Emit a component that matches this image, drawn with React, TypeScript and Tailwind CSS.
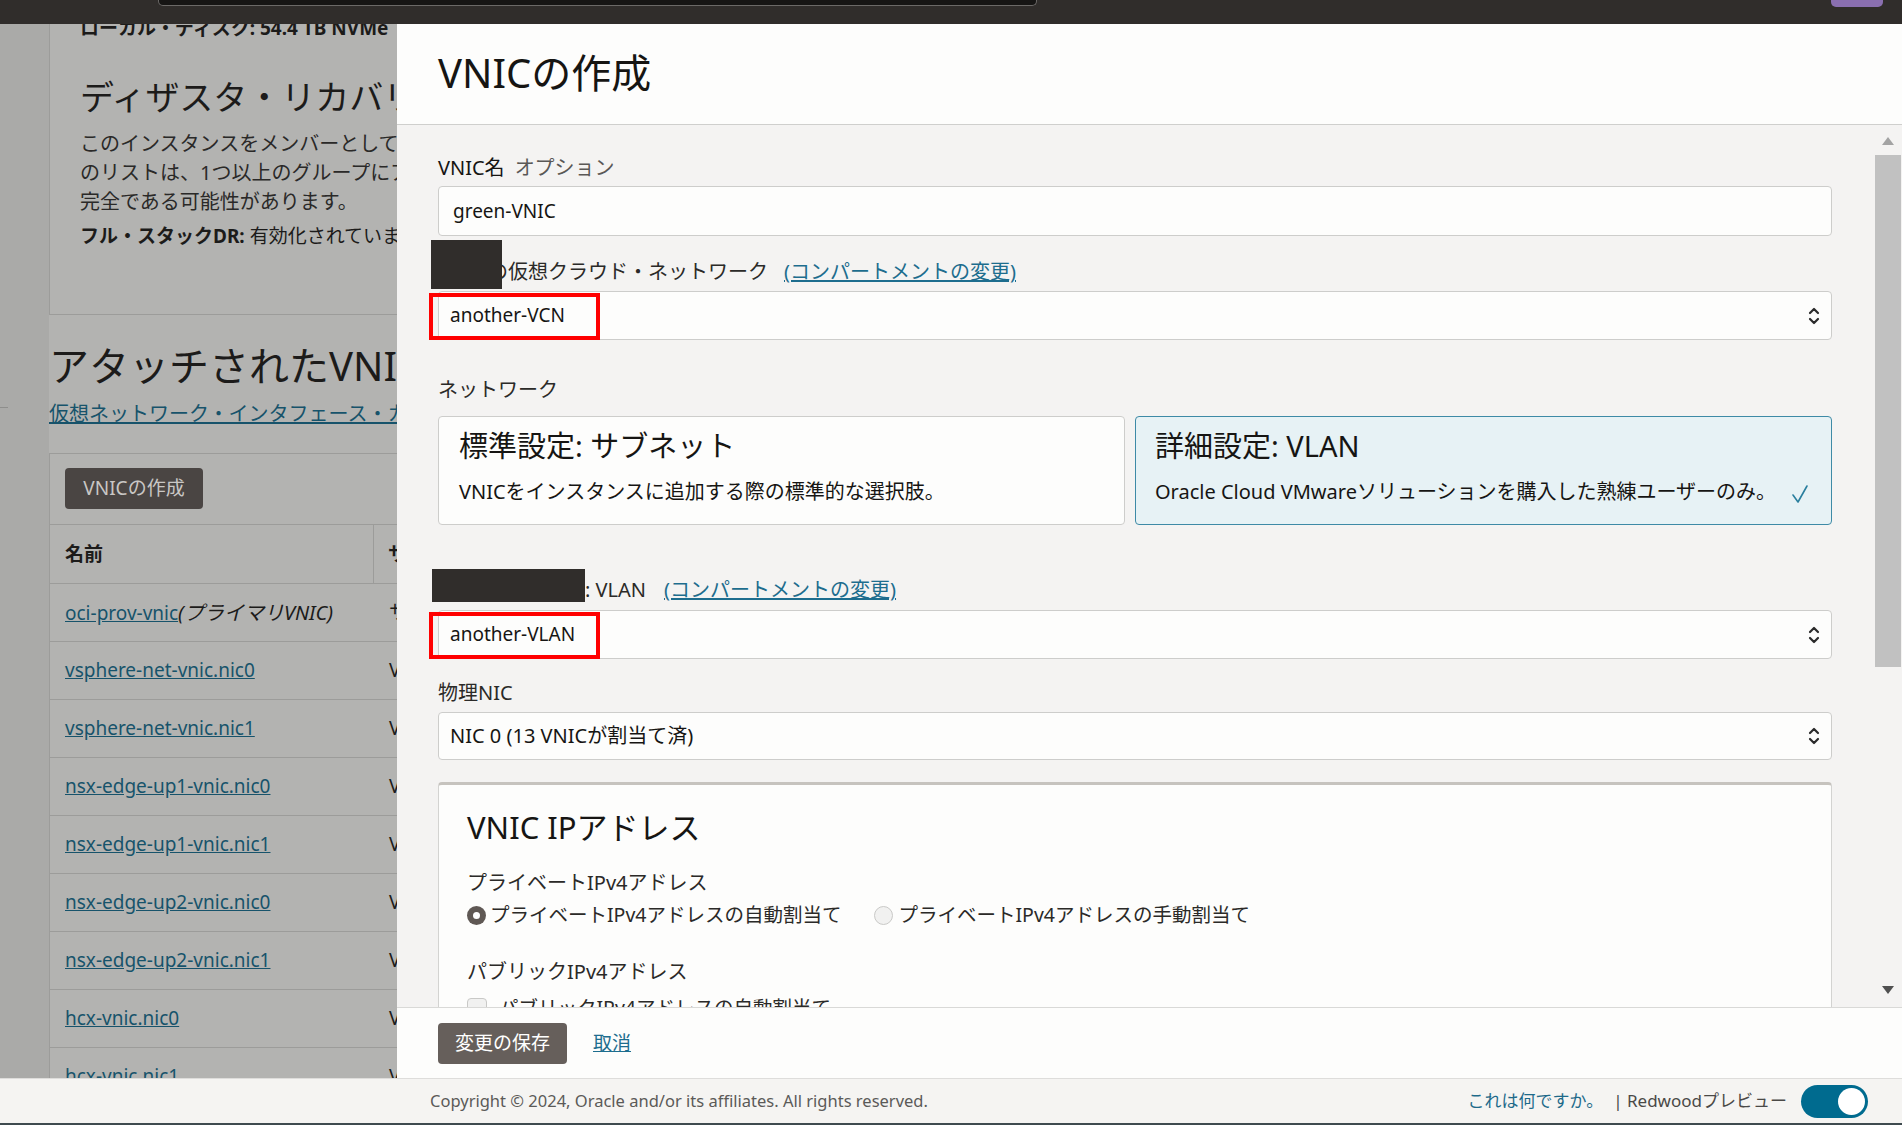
import React from 'react';

const font = "font-['Noto_Sans','Noto_Sans_CJK_JP',sans-serif]";

const rows = [
  'vsphere-net-vnic.nic0',
  'vsphere-net-vnic.nic1',
  'nsx-edge-up1-vnic.nic0',
  'nsx-edge-up1-vnic.nic1',
  'nsx-edge-up2-vnic.nic0',
  'nsx-edge-up2-vnic.nic1',
  'hcx-vnic.nic0',
  'hcx-vnic.nic1',
];

const Chevrons: React.FC = () => (
  <svg width="14" height="22" viewBox="0 0 14 22" fill="none" stroke="#2a2a2a" strokeWidth="2.2" strokeLinecap="round" strokeLinejoin="round">
    <path d="M3 8 L7 4 L11 8" />
    <path d="M3 14 L7 18 L11 14" />
  </svg>
);

const SelectBox: React.FC<{ value: string; marked?: boolean; h: string; size?: string }> = ({ value, marked, h, size = 'text-[19px]' }) => (
  <div className={`relative flex items-center justify-between ${h} bg-[#fdfdfc] border border-[#cdcdcb] rounded-[4px] pl-[11px] pr-[10px]`}>
    <span className={`${size} text-[#161513]`}>{value}</span>
    <Chevrons />
    {marked && (
      <div className="absolute -left-[10px] top-[1px] w-[171px] h-[47px] border-[4px] border-[#ff0000]" />
    )}
  </div>
);

const LeftPage: React.FC = () => (
  <div className="flex w-[397px] shrink-0 overflow-hidden bg-[#b3b3b1]">
    <div className="w-[49px] shrink-0 bg-[#aaaaa8] flex flex-col">
      <div className="h-[383px]" />
      <div className="w-[8px] h-px bg-[#8e8e8c]" />
    </div>
    <div className="w-[700px] shrink-0 text-[#1c1b1a]">
      <div className="border-l border-b border-[#9c9c9a] pl-[30px] h-[291px] overflow-hidden">
        <div className="-mt-[8px] text-[19px] leading-[24px] font-bold whitespace-nowrap">ローカル・ディスク: 54.4 TB NVMe</div>
        <div className="mt-[37px] text-[34px] leading-[40px] whitespace-nowrap">ディザスタ・リカバリ</div>
        <div className="mt-[12px] text-[20px] leading-[29px] text-[#2a2928] whitespace-nowrap">
          <div>このインスタンスをメンバーとして含むディザスタ・リカバリ保護グループ</div>
          <div>のリストは、1つ以上のグループにアクセスする権限がないため、不</div>
          <div>完全である可能性があります。</div>
        </div>
        <div className="mt-[8px] text-[19px] leading-[24px] whitespace-nowrap">
          <span className="font-bold">フル・スタックDR:</span> 有効化されていません
        </div>
      </div>
      <div className="mt-[28px] text-[40px] leading-[46px] whitespace-nowrap">アタッチされたVNIC</div>
      <div className="mt-[12px] text-[20px] leading-[26px] text-[#17536b] underline whitespace-nowrap">仮想ネットワーク・インタフェース・カード(VNIC)</div>
      <div className="mt-[26px] border border-[#9c9c9a]">
        <div className="pt-[14px] pl-[15px] pb-[15px]">
          <div className="w-[138px] h-[41px] rounded-[4px] bg-[#4a4543] text-[#c9c7c5] text-[19px] flex items-center justify-center">VNICの作成</div>
        </div>
        <div className="flex h-[60px] border-t border-b border-[#9c9c9a] text-[19px] font-bold">
          <div className="w-[324px] border-r border-[#9c9c9a] pl-[15px] flex items-center">名前</div>
          <div className="pl-[14px] flex items-center">サブネットまたはVLAN</div>
        </div>
        <div className="flex h-[58px] border-b border-[#9c9c9a] text-[19px] items-center">
          <div className="w-[324px] pl-[15px] whitespace-nowrap">
            <span className="text-[#17536b] underline">oci-prov-vnic</span>
            <span className="italic text-[20px]">(プライマリVNIC)</span>
          </div>
          <div className="pl-[15px]">サブネット</div>
        </div>
        {rows.map((r) => (
          <div key={r} className="flex h-[58px] border-b border-[#9c9c9a] text-[19px] items-center">
            <div className="w-[324px] pl-[15px] text-[#17536b] underline whitespace-nowrap">{r}</div>
            <div className="pl-[15px]">VLAN</div>
          </div>
        ))}
      </div>
    </div>
  </div>
);

const Radio: React.FC<{ on?: boolean }> = ({ on }) =>
  on ? (
    <div className="w-[19px] h-[19px] rounded-full bg-[#5f5854] flex items-center justify-center shrink-0">
      <div className="w-[7px] h-[7px] rounded-full bg-white" />
    </div>
  ) : (
    <div className="w-[19px] h-[19px] rounded-full bg-[#f1f1f0] border border-[#c9c9c7] shrink-0" />
  );

const Drawer: React.FC = () => (
  <div className="flex-1 flex flex-col min-w-0 text-[#161513]">
    <div className="h-[101px] shrink-0 bg-[#fdfdfc] border-b border-[#cfcfcd] pl-[41px] flex items-center">
      <h1 className="text-[40px] leading-[46px] -mt-[2px]">VNICの作成</h1>
    </div>
    <div className="flex-1 flex min-h-0 bg-[#f4f3f2]">
      <div className="flex-1 min-w-0 overflow-hidden pl-[41px] pr-[42px]">
        <div className="pt-[31px] text-[20px] leading-[24px]">
          VNIC名<span className="ml-[10px] text-[#5a5856]">オプション</span>
        </div>
        <div className="mt-[6px] h-[50px] bg-[#fdfdfc] border border-[#cdcdcb] rounded-[4px] pl-[14px] flex items-center text-[19px]">green-VNIC</div>

        <div className="flex items-end h-[49px] mt-[4px] text-[20px] leading-[24px]">
          <div className="relative z-10 -ml-[7px] w-[71px] h-[49px] bg-[#302d2b] shrink-0" />
          <span className="-ml-[14px] mb-[5px] text-[#2b2a28]">の仮想クラウド・ネットワーク</span>
          <span className="ml-[16px] mb-[5px] text-[#1d6d8e] underline">(コンパートメントの変更)</span>
        </div>
        <div className="mt-[2px]">
          <SelectBox value="another-VCN" marked h="h-[49px]" />
        </div>

        <div className="mt-[38px] text-[20px] leading-[24px] text-[#2b2a28]">ネットワーク</div>
        <div className="mt-[14px] flex gap-[10px] h-[109px]">
          <div className="w-[687px] shrink-0 bg-[#fdfdfc] border border-[#cdcdcb] rounded-[4px] pl-[20px] pt-[12px]">
            <div className="text-[29px] leading-[34px]">標準設定: サブネット</div>
            <div className="mt-[16px] text-[20px] leading-[26px]">VNICをインスタンスに追加する際の標準的な選択肢。</div>
          </div>
          <div className="flex-1 bg-[#e7f2f5] border border-[#3e8aa6] rounded-[4px] pl-[19px] pt-[12px] pr-[22px]">
            <div className="text-[29px] leading-[34px]">詳細設定: VLAN</div>
            <div className="mt-[16px] flex items-center justify-between text-[20px] leading-[26px]">
              <span>Oracle Cloud VMwareソリューションを購入した熟練ユーザーのみ。</span>
              <svg width="18" height="20" viewBox="0 0 18 20" fill="none" stroke="#2a7f9e" strokeWidth="1.6" strokeLinecap="round" strokeLinejoin="round" className="mt-[4px]">
                <path d="M2 11 L7 18 L16 2" />
              </svg>
            </div>
          </div>
        </div>

        <div className="flex items-end h-[33px] mt-[44px] text-[20px] leading-[24px]">
          <div className="-ml-[6px] w-[153px] h-[33px] bg-[#302d2b] shrink-0" />
          <span className="text-[#2b2a28]">: VLAN</span>
          <span className="ml-[18px] text-[#1d6d8e] underline">(コンパートメントの変更)</span>
        </div>
        <div className="mt-[8px]">
          <SelectBox value="another-VLAN" marked h="h-[49px]" />
        </div>

        <div className="mt-[22px] text-[20px] leading-[24px] text-[#2b2a28]">物理NIC</div>
        <div className="mt-[7px]">
          <SelectBox value="NIC 0 (13 VNICが割当て済)" h="h-[48px]" size="text-[20px]" />
        </div>

        <div className="mt-[22px] h-[400px] bg-[#fdfdfc] border-t-[3px] border-t-[#c6c3be] border-x border-x-[#d3d3d1] rounded-t-[4px] pl-[28px]">
          <div className="pt-[24px] text-[31px] leading-[36px]">VNIC IPアドレス</div>
          <div className="mt-[26px] text-[20px] leading-[24px] text-[#2b2a28]">プライベートIPv4アドレス</div>
          <div className="mt-[8px] flex items-center text-[19.5px] leading-[24px] text-[#2b2a28]">
            <Radio on />
            <span className="ml-[4px]">プライベートIPv4アドレスの自動割当て</span>
            <div className="ml-[33px]"><Radio /></div>
            <span className="ml-[5px]">プライベートIPv4アドレスの手動割当て</span>
          </div>
          <div className="mt-[33px] text-[20px] leading-[24px] text-[#2b2a28]">パブリックIPv4アドレス</div>
          <div className="mt-[12px] flex items-center text-[19.5px] leading-[24px] text-[#2b2a28]">
            <div className="w-[20px] h-[20px] rounded-[4px] border border-[#c9c9c7] bg-[#f1f1f0]" />
            <span className="ml-[12px]">パブリックIPv4アドレスの自動割当て</span>
          </div>
        </div>
      </div>
      <div className="w-[28px] shrink-0 flex flex-col items-center">
        <svg width="12" height="8" viewBox="0 0 12 8" className="mt-[12px]">
          <path d="M0 8 L6 0 L12 8 Z" fill="#a3a3a3" />
        </svg>
        <div className="mt-[10px] w-[26px] h-[512px] bg-[#c1c1c1]" />
        <div className="flex-1" />
        <svg width="12" height="8" viewBox="0 0 12 8" className="mb-[13px]">
          <path d="M0 0 L12 0 L6 8 Z" fill="#505050" />
        </svg>
      </div>
    </div>
    <div className="h-[71px] shrink-0 bg-[#fdfdfc] border-t border-[#d9d9d7] pl-[41px] flex items-center">
      <div className="w-[129px] h-[41px] rounded-[4px] bg-[#665f5b] text-white text-[19px] flex items-center justify-center">変更の保存</div>
      <span className="ml-[26px] text-[19px] text-[#1d6d8e] underline">取消</span>
    </div>
  </div>
);

const App: React.FC = () => (
  <div className={`w-[1902px] h-[1125px] flex flex-col overflow-hidden ${font}`}>
    <div className="h-[24px] shrink-0 bg-[#302d2b] flex items-start">
      <div className="ml-[158px] w-[879px] h-[6px] bg-[#161514] border-x border-b border-[#6b6967] rounded-b-[5px]" />
      <div className="flex-1" />
      <div className="mr-[19px] w-[52px] h-[7px] bg-[#8a6fb0] rounded-b-[5px]" />
    </div>
    <div className="flex-1 flex min-h-0">
      <LeftPage />
      <Drawer />
    </div>
    <div className="h-[47px] shrink-0 bg-[#f5f4f2] border-t border-[#dedddb] border-b-2 border-b-[#3f4b4f] flex items-center pl-[430px] pr-[34px]">
      <span className="text-[16.5px] text-[#5b5a58]">Copyright © 2024, Oracle and/or its affiliates. All rights reserved.</span>
      <div className="flex-1" />
      <span className="text-[17px] text-[#1e6a8a]">これは何ですか。</span>
      <span className="ml-[10px] text-[17px] text-[#4a4947]">| Redwoodプレビュー</span>
      <div className="ml-[14px] w-[67px] h-[33px] rounded-full bg-[#006b8f] flex items-center justify-end pr-[3px]">
        <div className="w-[27px] h-[27px] rounded-full bg-white" />
      </div>
    </div>
  </div>
);

export default App;
